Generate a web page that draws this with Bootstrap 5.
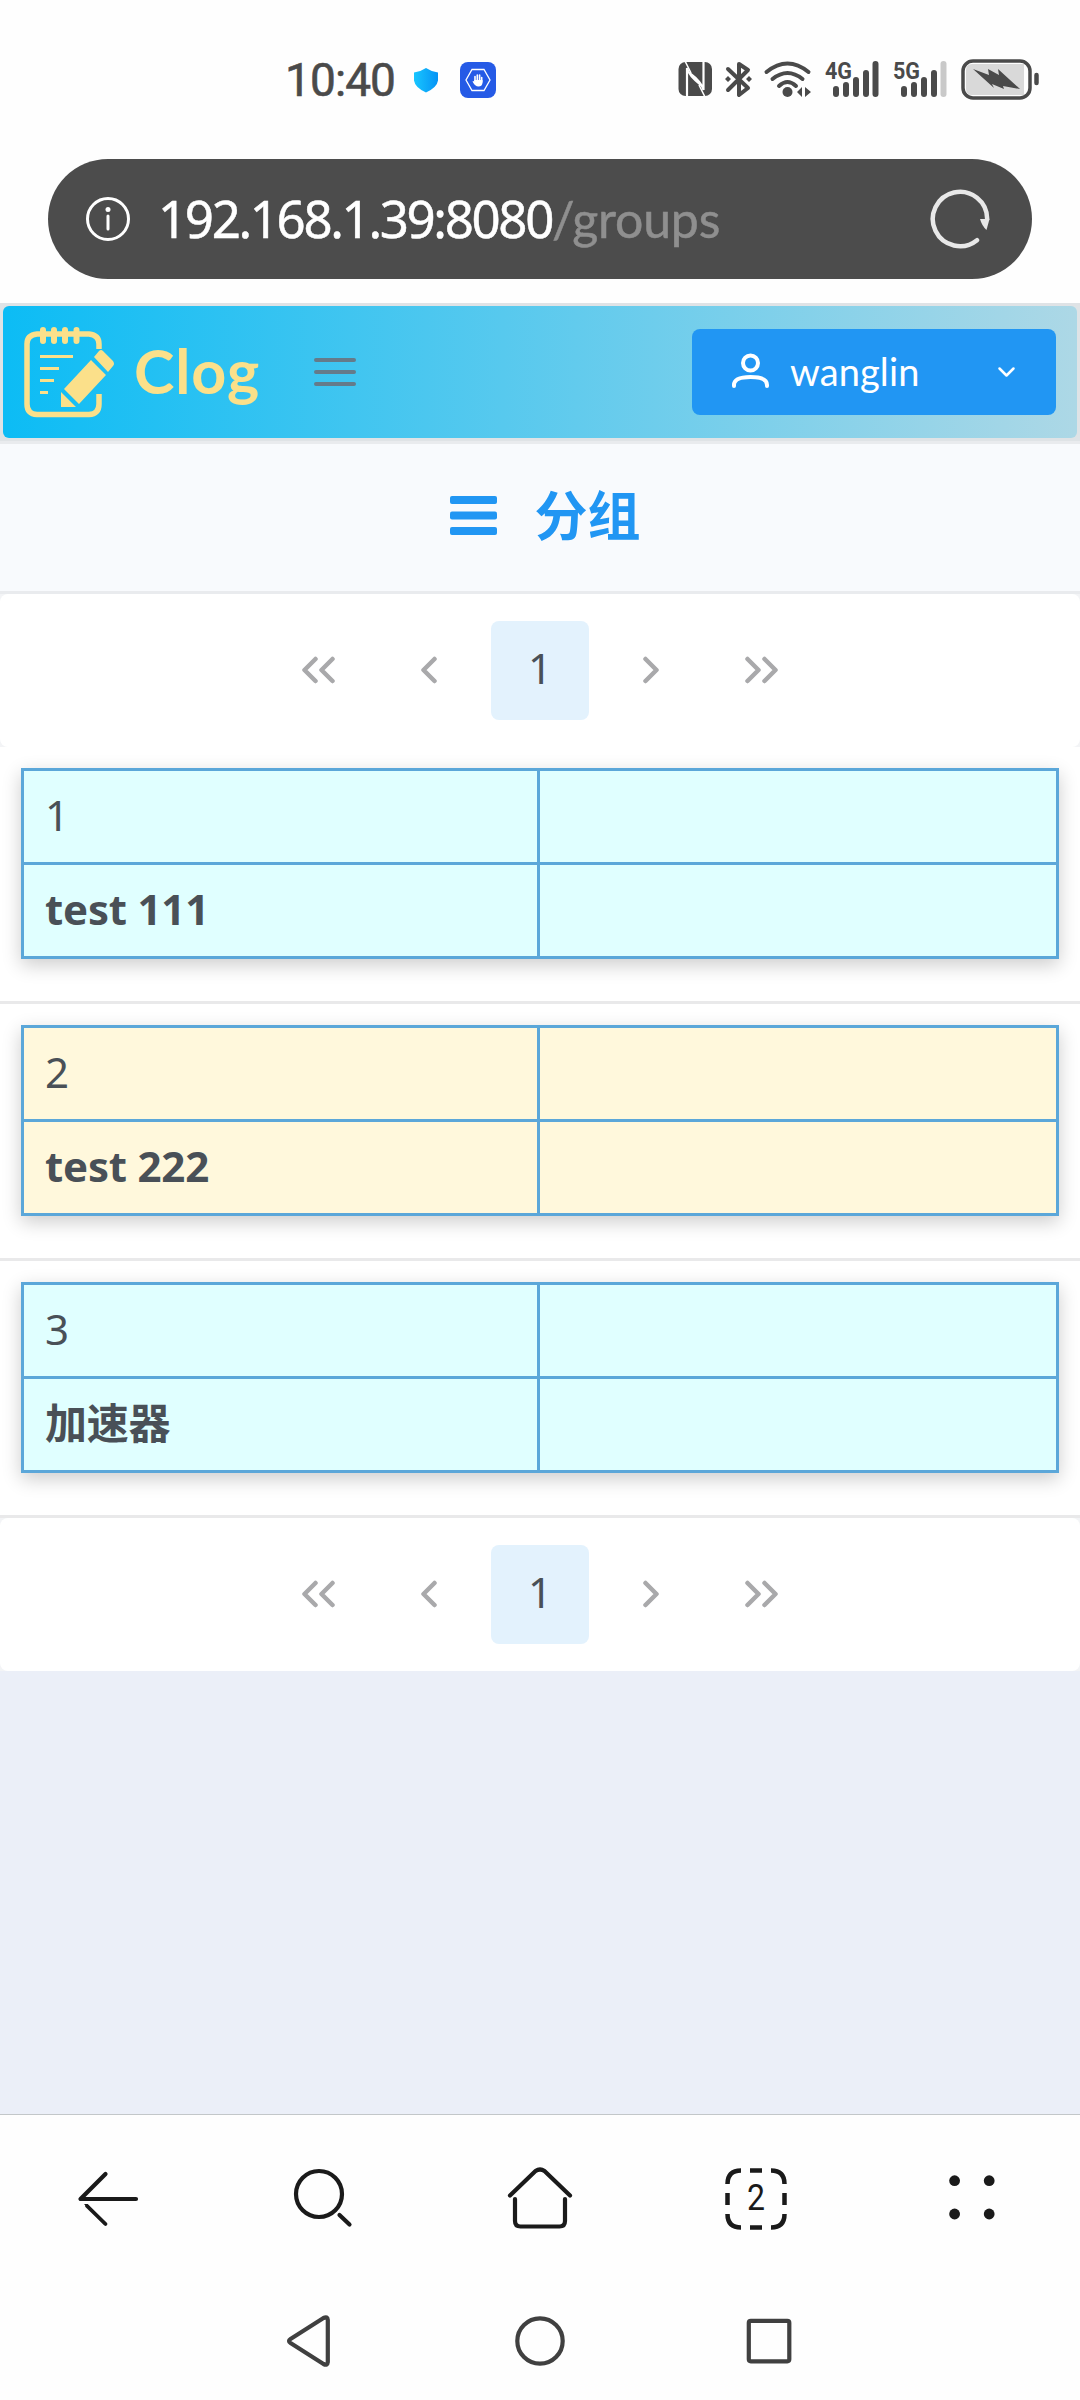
<!DOCTYPE html>
<html lang="zh-CN">
<head>
<meta charset="utf-8">
<meta name="viewport" content="width=device-width, initial-scale=1">
<title>Clog</title>
<link href="https://cdn.jsdelivr.net/npm/bootstrap@5.3.0/dist/css/bootstrap.min.css" rel="stylesheet">
<style>
body{width:1080px;height:2400px;overflow:hidden;background:#fefefe;color:#495057;font-family:"Noto Sans","Noto Sans CJK SC",sans-serif}
svg{display:block;flex:none}
.status-bar{height:159px;padding:40px 40px 0 285px}
.status-bar>div{height:80px}
.clock{font:400 46px/1 Roboto,sans-serif;letter-spacing:-.9px;color:#4a4a4a;width:127px;-webkit-text-stroke:.6px #4a4a4a}
.shield{margin-right:22px}
.url-bar{height:120px;margin:0 48px 24px;border-radius:60px;background:#4c4c4c;color:#fff;padding:0 41px 0 36px}
.url-text{font:400 51px/1 "Noto Sans",sans-serif;letter-spacing:-2.35px;margin-left:26px;padding-bottom:2px;white-space:nowrap;-webkit-text-stroke:.5px currentColor}
.url-path{color:#8f8f8f;font-family:Lato,sans-serif;letter-spacing:-.2px;font-size:50px}
.top-frame{height:141px;background:#dfe3e6;border-bottom:3px solid #e9ebee;padding:3px 3px 3px}
.topbar{height:132px;border-radius:6px;background:linear-gradient(90deg,#0cbcf5,#add8e6);padding:0 21px 0 18px}
.brand{font:700 61px/1 Lato,sans-serif;color:#fbe08a;width:130px;margin-left:15px;letter-spacing:.9px;padding-bottom:4px}
.menu-icon{margin-left:48px}
.user-btn,.user-btn:hover{width:364px;height:86px;border-radius:8px;border:0;background:#2196f3;color:#fff;padding:0 36px}
.user-name{font:400 38px/1 Lato,sans-serif;margin-left:17px;padding-bottom:3px;letter-spacing:.1px}
.page-title{height:150px;background:#f8fafd;border-bottom:3px solid #e9ebee;color:#2196f3;gap:38px;padding:0 0 5px 10px}
.page-title h1{font:700 53px/1 "Noto Sans CJK SC",sans-serif;margin:0;padding-bottom:3px}
.pager-wrap{background:#f3f4f6}
.pager{height:153px;border-radius:8px;background:#fff;gap:13px;margin:0}
.pager .page-item .page-link{width:98px;height:99px;margin:0;border:0;border-radius:8px;background:none;color:#a9a9ab;display:flex;align-items:center;justify-content:center;padding:0 0 2px;font:400 42px/1 "Noto Sans",sans-serif}
.pager .active .page-link{background:#e3f2fd!important;color:#495057!important;padding-bottom:6px!important}
.group-item{height:257px;padding:21px 21px 0;background:#fff;border-bottom:3px solid #e9e9ea}
.group-table{width:1038px;height:191px;margin:0;border-collapse:collapse;table-layout:fixed;font-size:42px;line-height:1;color:#495057;background:#e0ffff;box-shadow:0 6px 18px rgba(0,0,0,.2)}
.group-table.warm{background:#fff8dc}
.group-table td{height:94px;border:3px solid #5ba7d9;padding:0 21px 4px;vertical-align:middle}
.group-table td:first-child{width:516px}
.group-name{font-weight:700;letter-spacing:-.2px}
.blank-area{height:443px;background:#ebeff8}
.browser-nav{height:169px;border-top:1px solid #c3c7c9;color:#1a1a1a}
.system-nav{height:116px;gap:150px;color:#404040}
</style>
</head>
<body>
<header class="status-bar d-flex">
  <div class="d-flex align-items-center flex-grow-1">
    <span class="clock">10:40</span>
    <svg class="shield" width="26" height="28" viewBox="412 66 26 28"><defs><linearGradient id="sh"><stop stop-color="#18c6ff"/><stop offset="1" stop-color="#0593f5"/></linearGradient></defs><path d="M426 68q6 4 12 4.500v8q-1 7-12 12-11-5-12-12v-8q6-.5 12-4.500z" fill="url(#sh)"/></svg>
    <svg width="36" height="36" viewBox="0 0 36 36"><rect width="36" height="36" rx="8" fill="#255ae6"/><path d="M12 7.500h12l6 10.500-6 10.500H12L6 18z" fill="none" stroke="#fff" stroke-width="1.300"/><path d="M15 19v-4.500M17.300 19v-6M19.600 19v-6M21.700 20v-4.500" stroke="#fff" stroke-width="1.600" stroke-linecap="round"/><path d="M14.200 18h8.300v3q-.5 3.500-4 3.500t-6-5q1-1 1.700.3z" fill="#fff"/></svg>
  </div>
  <svg width="362" height="80" viewBox="678 40 362 80" fill="none" stroke="#4a4a4a">
    <rect x="678.500" y="62" width="33.500" height="34" rx="7" fill="#4a4a4a" stroke="none"/>
    <path d="M687 97V68q2 8 14 17M703.500 61v29q-2-8-14-17" stroke="#fff" stroke-width="2.200"/><path d="M685 61l6 12M699 85l6 12" stroke="#fff" stroke-width="1.600"/>
    <path d="M728 69l20 19-9 7V64l9 6-20 20" stroke-width="4" stroke-linecap="round" stroke-linejoin="round"/><path d="M725 79l3-3 3 3-3 3zM746 79l3-3 3 3-3 3z" fill="#4a4a4a" stroke="none"/>
    <g stroke-width="4" stroke-linecap="round"><path d="M766.500 72q21-17 42 0M772.500 79q15-12 30 0M779 86q8.500-8 17 0"/></g>
    <circle cx="787.500" cy="92" r="5" fill="#4a4a4a" stroke="none"/><path d="M797 92l5-5v10zM805 87l6 5-6 5z" fill="#4a4a4a" stroke="none"/>
    <g stroke-width="6" stroke-linecap="round"><path d="M836 89v5M846 85v9M856 80v14M866 73v21M875.500 64v30"/><path d="M904 89v5M914 85v9M924 80v14M934 73v21"/><path d="M943.500 64v30" stroke="#c9c9c9"/></g>
    <g fill="#4a4a4a" stroke="none" font-family="Roboto,sans-serif" font-weight="700" font-size="23"><text x="825" y="78.500" textLength="27" lengthAdjust="spacingAndGlyphs">4G</text><text x="893" y="78.500" textLength="27" lengthAdjust="spacingAndGlyphs">5G</text></g>
    <rect x="963" y="61" width="67" height="37" rx="10" stroke-width="3.500"/><path d="M972 64h52v31h-52q-6 0-6-6V70q0-6 6-6z" fill="#d9d9d9" stroke="none"/><path d="M1036.500 75v8" stroke-width="4.500" stroke-linecap="round"/>
    <path d="M973 69l16 6-1-6 11 6-1-6 22 20-17-3 1 3-12-5 2 4z" fill="#4a4a4a" stroke="none"/>
  </svg>
</header>

<div class="url-bar d-flex align-items-center">
  <svg width="48" height="48" viewBox="84 195 48 48" fill="none" stroke="#fff" stroke-width="3"><circle cx="108" cy="219" r="20.500"/><path d="M108 216v13" stroke-linecap="round"/><circle cx="108" cy="209.500" r="2.500" fill="#fff" stroke="none"/></svg>
  <div class="url-text flex-grow-1">192.168.1.39:8080<span class="url-path">/groups</span></div>
  <svg width="62" height="62" viewBox="929 188 62 62" fill="none" stroke="#e8e8e8" stroke-width="4.500" stroke-linecap="round"><path d="M987.200 219A27.200 27.200 0 1 0 977 240.200"/><path d="M980 219h9.500l-3 11q-4.500-4-6.500-11z" fill="#e8e8e8" stroke="none"/></svg>
</div>

<div class="top-frame">
  <nav class="topbar d-flex align-items-center">
    <svg width="98" height="98" viewBox="21 323 98 98" fill="none" stroke="#fbe08a"><path d="M99 349v-5q0-9-10-10H37q-10 1-10 10v60q0 10 10 10.500h52q10-.5 10-10.500v-10" stroke-width="5.500"/><path d="M43 330v11M54 330v11M65 330v11M76.500 330v11" stroke-width="6" stroke-linecap="round"/><path d="M40 356.500h33M40 368.500h19M40 380.500h14M40 392.500h8" stroke-width="3"/><g fill="#fbe08a" stroke="none"><path d="M91 360l15 15-27 29-15-15zM94 357l5-6q2-2 4 0l10 10q2 3 0 5l-5 6zM61 392l15 15H61z"/></g></svg>
    <span class="brand">Clog</span>
    <svg class="menu-icon" width="46" height="34" viewBox="312 355 46 34" stroke="#657b8a" stroke-width="4" stroke-linecap="round"><path d="M316 360h38M316 372h38M316 384h38"/></svg>
    <button class="btn user-btn d-flex align-items-center ms-auto" type="button">
      <svg width="45" height="44" viewBox="728 350 45 44" fill="none" stroke="#fff" stroke-width="4" stroke-linecap="round"><circle cx="750.500" cy="363" r="7.500"/><path d="M734 386v-1c0-6 7-8 16.500-8s16.500 2 16.500 8v1"/></svg>
      <span class="user-name">wanglin</span>
      <svg class="ms-auto" width="26" height="20" viewBox="994 362 26 20" fill="none" stroke="#fff" stroke-width="2.500" stroke-linecap="round" stroke-linejoin="round"><path d="M999.500 368.500l7 7 7-7"/></svg>
    </button>
  </nav>
</div>

<main>
  <div class="page-title d-flex align-items-center justify-content-center">
    <svg width="47" height="39" viewBox="0 0 47 39" fill="#2196f3"><rect width="47" height="8" rx="2"/><rect y="15.500" width="47" height="8" rx="2"/><rect y="31" width="47" height="8" rx="2"/></svg>
    <h1>分组</h1>
  </div>
  <div class="pager-wrap">
    <ul class="pagination pager justify-content-center align-items-center">
      <li class="page-item"><a class="page-link" href="#"><svg width="34" height="28" viewBox="0 0 34 28" fill="none" stroke="currentColor" stroke-width="4.500" stroke-linecap="round" stroke-linejoin="round"><path d="M14.500 3l-11 11 11 11M31.500 3l-11 11 11 11"/></svg></a></li>
      <li class="page-item"><a class="page-link" href="#"><svg width="18" height="28" viewBox="0 0 18 28" fill="none" stroke="currentColor" stroke-width="4.500" stroke-linecap="round" stroke-linejoin="round"><path d="M14.500 3l-11 11 11 11"/></svg></a></li>
      <li class="page-item active"><a class="page-link" href="#">1</a></li>
      <li class="page-item"><a class="page-link" href="#"><svg width="18" height="28" viewBox="0 0 18 28" fill="none" stroke="currentColor" stroke-width="4.500" stroke-linecap="round" stroke-linejoin="round"><path d="M3.500 3l11 11-11 11"/></svg></a></li>
      <li class="page-item"><a class="page-link" href="#"><svg width="34" height="28" viewBox="0 0 34 28" fill="none" stroke="currentColor" stroke-width="4.500" stroke-linecap="round" stroke-linejoin="round"><path d="M2.500 3l11 11-11 11M19.500 3l11 11-11 11"/></svg></a></li>
    </ul>
  </div>
  <div class="group-item"><table class="group-table"><tr><td>1</td><td></td></tr><tr><td class="group-name">test 111</td><td></td></tr></table></div>
  <div class="group-item"><table class="group-table warm"><tr><td>2</td><td></td></tr><tr><td class="group-name">test 222</td><td></td></tr></table></div>
  <div class="group-item"><table class="group-table"><tr><td>3</td><td></td></tr><tr><td class="group-name">加速器</td><td></td></tr></table></div>
  <div class="pager-wrap">
    <ul class="pagination pager justify-content-center align-items-center">
      <li class="page-item"><a class="page-link" href="#"><svg width="34" height="28" viewBox="0 0 34 28" fill="none" stroke="currentColor" stroke-width="4.500" stroke-linecap="round" stroke-linejoin="round"><path d="M14.500 3l-11 11 11 11M31.500 3l-11 11 11 11"/></svg></a></li>
      <li class="page-item"><a class="page-link" href="#"><svg width="18" height="28" viewBox="0 0 18 28" fill="none" stroke="currentColor" stroke-width="4.500" stroke-linecap="round" stroke-linejoin="round"><path d="M14.500 3l-11 11 11 11"/></svg></a></li>
      <li class="page-item active"><a class="page-link" href="#">1</a></li>
      <li class="page-item"><a class="page-link" href="#"><svg width="18" height="28" viewBox="0 0 18 28" fill="none" stroke="currentColor" stroke-width="4.500" stroke-linecap="round" stroke-linejoin="round"><path d="M3.500 3l11 11-11 11"/></svg></a></li>
      <li class="page-item"><a class="page-link" href="#"><svg width="34" height="28" viewBox="0 0 34 28" fill="none" stroke="currentColor" stroke-width="4.500" stroke-linecap="round" stroke-linejoin="round"><path d="M2.500 3l11 11-11 11M19.500 3l11 11-11 11"/></svg></a></li>
    </ul>
  </div>
  <div class="blank-area"></div>
</main>

<footer>
  <div class="browser-nav d-flex align-items-center justify-content-around">
    <svg width="80" height="80" viewBox="68 2159 80 80" fill="none" stroke="currentColor" stroke-width="4.200" stroke-linecap="round" stroke-linejoin="round"><path d="M105.500 2174l-25 25H136"/><path d="M84 2204h3.500l19.300 19.500q.2 2-2.500 1.500z" fill="currentColor" stroke="none"/><path d="M87 2206l18.500 18" stroke-width="3.800"/></svg>
    <svg width="80" height="80" viewBox="284 2159 80 80" fill="none" stroke="currentColor" stroke-width="4.200"><circle cx="319" cy="2194" r="23"/><path d="M339.500 2215l10 9.500" stroke-linecap="round"/></svg>
    <svg width="80" height="80" viewBox="500 2159 80 80" fill="none" stroke="currentColor" stroke-width="4.200" stroke-linecap="round" stroke-linejoin="round"><path d="M510 2195.500l25.500-24.500q4.500-3 9 0l25.500 24.500"/><path d="M515 2199v22q0 5.500 5.500 5.500h39q5.500 0 5.500-5.500v-22"/></svg>
    <svg width="80" height="80" viewBox="716 2159 80 80" fill="none" stroke="currentColor" stroke-width="4.500"><path d="M727.500 2184q0-13.500 13.500-13.500M771 2170.500q13.500 0 13.500 13.500M784.500 2214q0 13.500-13.500 13.500M741 2227.500q-13.500 0-13.500-13.500M750 2170.500h12M750 2227.500h12M727.500 2193v12M784.500 2193v12"/><text x="756" y="2210" text-anchor="middle" font-family="Roboto,sans-serif" font-size="37" textLength="18" lengthAdjust="spacingAndGlyphs" fill="currentColor" stroke="none">2</text></svg>
    <svg width="80" height="80" viewBox="932 2159 80 80" fill="currentColor"><circle cx="954.600" cy="2180.700" r="5.400"/><circle cx="989.200" cy="2180.700" r="5.400"/><circle cx="954.600" cy="2214" r="5.400"/><circle cx="989.200" cy="2214" r="5.400"/></svg>
  </div>
  <div class="system-nav d-flex align-items-center justify-content-center">
    <svg width="80" height="80" viewBox="270 2301 80 80" fill="none" stroke="currentColor" stroke-width="4.200" stroke-linejoin="round"><path d="M290.500 2339l33-21q4-2 4.300 2v42q-.3 4-4.300 2l-33-21q-3-2 0-4z"/></svg>
    <svg width="80" height="80" viewBox="500 2301 80 80" fill="none" stroke="currentColor" stroke-width="4.200"><circle cx="540" cy="2341" r="22.700"/></svg>
    <svg width="80" height="80" viewBox="730 2301 80 80" fill="none" stroke="currentColor" stroke-width="4.200"><rect x="748.800" y="2320.800" width="40.500" height="40.500" rx="2"/></svg>
  </div>
</footer>
<script src="https://cdn.jsdelivr.net/npm/bootstrap@5.3.0/dist/js/bootstrap.bundle.min.js"></script>
</body>
</html>
